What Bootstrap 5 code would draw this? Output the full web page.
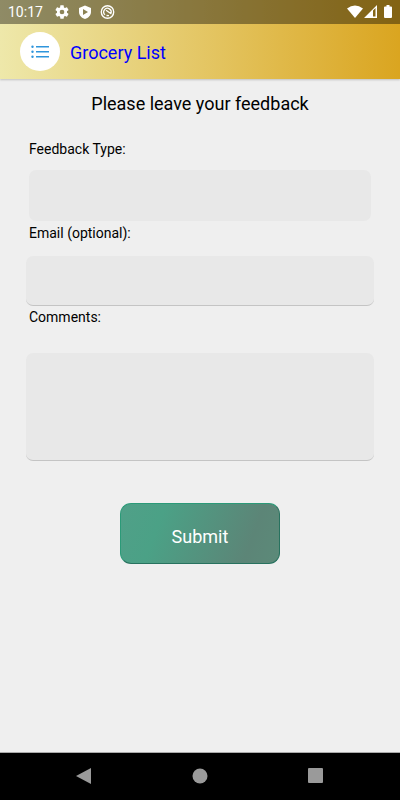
<!DOCTYPE html>
<html lang="en">
<head>
<meta charset="utf-8">
<meta name="viewport" content="width=device-width, initial-scale=1">
<title>Grocery List - Feedback</title>
<link href="https://cdn.jsdelivr.net/npm/bootstrap@5.3.0/dist/css/bootstrap.min.css" rel="stylesheet">
<style>
  body { font-family: Roboto, "Liberation Sans", sans-serif; background: #efefef; color: #000; }
  .app-top { background: linear-gradient(90deg, #eee8aa, #daa520); box-shadow: 0 1px 2px rgba(0,0,0,.2); }
  .status-strip { height: 24px; background: rgba(0,0,0,.4); color: #fff; font-size: 14px; line-height: 24px; padding: 0 7px 0 8px; }
  .app-bar { height: 55px; padding: 0 20px; gap: 10px; }
  .menu-btn { width: 40px; height: 39px; background: #fff; }
  .app-title { font-size: 18px; line-height: 24px; color: #00f; padding-top: 2px; }
  .page-title { font-size: 18px; line-height: 24px; margin: 13px 0 23px; font-weight: 400; }
  .feedback-form { padding: 0 26px; }
  .field-label { font-size: 14px; line-height: 20px; padding-left: 3px; }
  .field-box.form-control, .field-box.form-select { background: #e8e8e8; border: 0; border-radius: 7px; font-size: 14px; }
  .field-box.form-control { border-bottom: 1px solid #c4c4c4; }
  .type-wrap { padding: 11px 3px 2px; }
  .email-wrap { padding: 13px 0 1px; }
  .comment-wrap { padding: 26px 0 42px; }
  .one-line { height: 50px; }
  .type-wrap .one-line { height: 51px; }
  .comment-box.form-control { height: 108px; resize: none; }
  .submit-btn.btn { width: 160px; height: 61px; padding: 5px 0 0; color: #fff; font-size: 18px; border: 1px solid; border-color: #2b9a78 #28725f #28725f #2b9a78; border-radius: 11px; background: linear-gradient(110deg, #50a088 0%, #4ba186 25%, #5c8577 80%, #5c8a79 100%); }
  .system-nav { height: 47px; padding: 0 26px 1px; background: #000; box-shadow: 0 -1px 0 #aaa; }
</style>
</head>
<body class="d-flex flex-column min-vh-100">
<header class="app-top">
  <div class="status-strip d-flex align-items-center justify-content-between">
    <div class="d-flex align-items-center">
      <span>10:17</span>
      <svg class="ms-2" width="68" height="24" viewBox="-1 0 68 24" aria-hidden="true">
        <g transform="translate(2 4) scale(.667)" fill="#fff"><path d="M19.43 12.98c.04-.32.07-.64.07-.98s-.03-.66-.07-.98l2.11-1.65c.19-.15.24-.42.12-.64l-2-3.46c-.12-.22-.39-.3-.61-.22l-2.49 1c-.52-.4-1.08-.73-1.69-.98l-.38-2.65A.49.49 0 0 0 14 2h-4c-.25 0-.46.18-.49.42l-.38 2.65c-.61.25-1.17.59-1.69.98l-2.49-1c-.23-.09-.49 0-.61.22l-2 3.46c-.13.22-.07.49.12.64l2.110 1.650c-.04.32-.07.65-.07.98s.03.66.07.98l-2.110 1.650c-.19.15-.24.42-.12.64l2 3.460c.12.22.39.3.61.22l2.490-1c.52.4 1.080.73 1.690.98l.38 2.650c.03.24.24.42.49.42h4c.25 0 .46-.18.49-.42l.38-2.650c.61-.25 1.170-.59 1.690-.98l2.490 1c.23.09.49 0 .61-.22l2-3.460c.12-.22.07-.49-.12-.64zM12 15.500a3.500 3.500 0 1 1 0-7 3.500 3.500 0 0 1 0 7z"/></g>
        <path fill="#fff" fill-rule="evenodd" d="M33 5.500 39 8v4c0 3.300-2.600 6-6 7-3.400-1-6-3.700-6-7V8zM31 9v6l5-3z"/>
        <g fill="none" stroke="#fff"><circle cx="55.500" cy="12" r="6.200" stroke-width="1.400"/><path d="M53 14.800a3.700 3.700 0 1 1 5.800-1.200l-4.800-3.300M54.500 15.500l2.500.1" stroke-width="1.300"/></g>
      </svg>
    </div>
    <svg width="47" height="24" viewBox="346 0 47 24" aria-hidden="true">
      <path fill="#fff" d="M347 8.500q8-6 16 0L355 18z"/>
      <path fill="#fff" fill-rule="evenodd" d="M377 5v13h-13zM373 10.500V16.500h2.500V8z"/>
      <path fill="#fff" d="M386.500 5h3v1.500h1.500q1 0 1 1V17q0 1-1 1h-6q-1 0-1-1V7.500q0-1 1-1h1.500z"/>
    </svg>
  </div>
  <nav class="app-bar d-flex align-items-center" aria-label="Main">
    <button type="button" class="menu-btn btn rounded-circle border-0 p-0 d-flex align-items-center justify-content-center flex-shrink-0" aria-label="Menu">
      <svg width="20" height="16" viewBox="0 0 20 16" fill="#2f95dc" aria-hidden="true"><path d="M6 2h13v1.500H6zM6 7h13v1.500H6zM6 12h13v1.500H6z"/><circle cx="2.500" cy="2.700" r="1.200"/><circle cx="2.500" cy="7.700" r="1.200"/><circle cx="2.500" cy="12.700" r="1.200"/></svg>
    </button>
    <span class="app-title">Grocery List</span>
  </nav>
</header>
<main class="flex-grow-1">
  <h1 class="page-title text-center">Please leave your feedback</h1>
  <form class="feedback-form">
    <label class="field-label d-block" for="type">Feedback Type:</label>
    <div class="type-wrap"><select class="field-box one-line form-select" id="type"><option value=""></option></select></div>
    <label class="field-label d-block" for="email">Email (optional):</label>
    <div class="email-wrap"><input class="field-box one-line form-control" type="email" id="email"></div>
    <label class="field-label d-block" for="comments">Comments:</label>
    <div class="comment-wrap"><textarea class="field-box comment-box form-control" id="comments"></textarea></div>
    <div class="text-center"><button class="submit-btn btn" type="submit">Submit</button></div>
  </form>
</main>
<footer class="system-nav d-flex align-items-center">
  <button type="button" class="btn border-0 p-0 flex-fill" aria-label="Back"><svg class="d-block mx-auto" width="16" height="16" viewBox="0 0 16 16" fill="#9a9a9a"><path d="M15 0v16L0 8z"/></svg></button>
  <button type="button" class="btn border-0 p-0 flex-fill" aria-label="Home"><svg class="d-block mx-auto" width="16" height="16" viewBox="0 0 16 16" fill="#9a9a9a"><circle cx="8" cy="8" r="7.500"/></svg></button>
  <button type="button" class="btn border-0 p-0 flex-fill" aria-label="Recent apps"><svg class="d-block mx-auto" width="16" height="16" viewBox="0 0 16 16" fill="#9a9a9a"><rect width="15" height="15" rx="1"/></svg></button>
</footer>
<script src="https://cdn.jsdelivr.net/npm/bootstrap@5.3.0/dist/js/bootstrap.bundle.min.js"></script>
</body>
</html>
